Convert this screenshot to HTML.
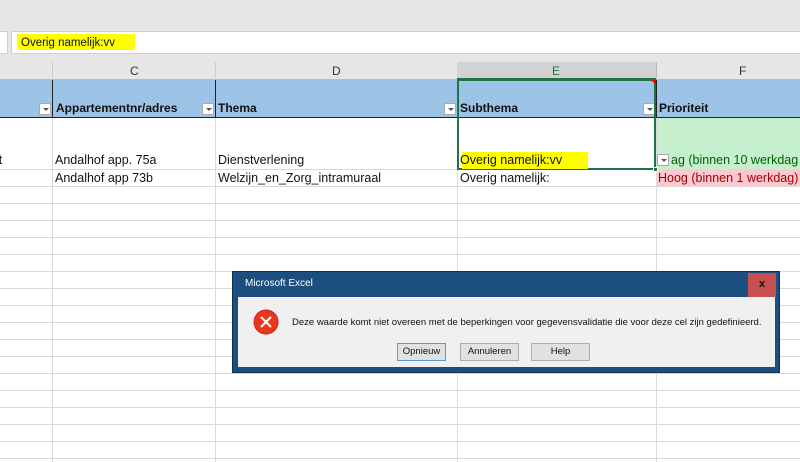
<!DOCTYPE html>
<html><head><meta charset="utf-8"><style>
*{margin:0;padding:0;box-sizing:border-box}
body{width:800px;height:462px;overflow:hidden;background:#fff;font-family:"Liberation Sans","DejaVu Sans",sans-serif;position:relative}
.a{position:absolute}
.t{position:absolute;font-size:12.5px;color:#111;white-space:nowrap;font-family:"Liberation Sans",sans-serif}
.b{font-weight:bold;font-size:12px}
.hl{position:absolute;background:#9dc3e6}
.dd{position:absolute;width:12px;height:12px;background:#fff;border:1px solid #aaa}
.dd:after{content:"";position:absolute;left:3px;top:4px;border-left:3px solid transparent;border-right:3px solid transparent;border-top:3px solid #555}
.hline{position:absolute;left:0;width:800px;height:1px;background:#dadada}
.vline{position:absolute;top:118px;width:1px;height:344px;background:#dadada}
.btn{position:absolute;top:343px;height:18px;background:#e1e1e1;border:1px solid #adadad;font-size:9.5px;text-align:center;line-height:16px;color:#111;font-family:"Liberation Sans",sans-serif}
</style></head><body>
<div class="a" style="left:0;top:0;width:800px;height:62px;background:#e6e6e6"></div>
<div class="a" style="left:0;top:31px;width:8px;height:23px;background:#fff;border:1px solid #d0d0d0;border-left:none"></div>
<div class="a" style="left:11px;top:31px;width:789px;height:23px;background:#fff;border:1px solid #d0d0d0;border-right:none"></div>
<div class="a" style="left:17px;top:34px;width:118px;height:16px;background:#ffff00"></div>
<div class="t" style="left:21px;top:36px;font-size:11.5px;line-height:14px">Overig namelijk:vv</div>
<div class="a" style="left:0;top:62px;width:800px;height:18px;background:#e6e6e6;border-bottom:1px solid #bbb"></div>
<div class="a" style="left:52px;top:62px;width:1px;height:18px;background:#ccc"></div>
<div class="a" style="left:215px;top:62px;width:1px;height:18px;background:#ccc"></div>
<div class="a" style="left:457px;top:62px;width:199px;height:18px;background:#d2d2d2;border-bottom:2px solid #217346"></div>
<div class="a" style="left:656px;top:62px;width:1px;height:18px;background:#bbb"></div>
<div class="t" style="left:130px;top:64px;font-size:12px;color:#333">C</div>
<div class="t" style="left:332px;top:64px;font-size:12px;color:#333">D</div>
<div class="t" style="left:552px;top:64px;font-size:12px;color:#217346">E</div>
<div class="t" style="left:739px;top:64px;font-size:12px;color:#333">F</div>
<div class="hl" style="left:0;top:80px;width:800px;height:38px"></div>
<div class="a" style="left:52px;top:80px;width:1px;height:38px;background:#222"></div>
<div class="a" style="left:215px;top:80px;width:1px;height:38px;background:#222"></div>
<div class="a" style="left:656px;top:80px;width:1px;height:38px;background:#222"></div>
<div class="a" style="left:0;top:117px;width:800px;height:1px;background:#222"></div>
<div class="dd" style="left:39px;top:103px"></div>
<div class="dd" style="left:202px;top:103px"></div>
<div class="dd" style="left:444px;top:103px"></div>
<div class="dd" style="left:643px;top:103px"></div>
<div class="t b" style="left:56px;top:101px">Appartementnr/adres</div>
<div class="t b" style="left:218px;top:101px">Thema</div>
<div class="t b" style="left:460px;top:101px">Subthema</div>
<div class="t b" style="left:659px;top:101px">Prioriteit</div>
<div class="a" style="left:457px;top:79px;width:199px;height:91px;border:2px solid #217346;border-bottom:none"></div>
<div class="a" style="left:651px;top:80px;width:0;height:0;border-left:5px solid transparent;border-top:5px solid #e00"></div>
<div class="a" style="left:657px;top:118px;width:143px;height:52px;background:#c6efce"></div>
<div class="a" style="left:657px;top:170px;width:143px;height:16px;background:#ffc7ce"></div>
<div class="hline" style="top:169px"></div>
<div class="hline" style="top:186px"></div>
<div class="hline" style="top:203px"></div><div class="hline" style="top:220px"></div><div class="hline" style="top:237px"></div><div class="hline" style="top:254px"></div><div class="hline" style="top:271px"></div><div class="hline" style="top:288px"></div><div class="hline" style="top:305px"></div><div class="hline" style="top:322px"></div><div class="hline" style="top:339px"></div><div class="hline" style="top:356px"></div><div class="hline" style="top:373px"></div><div class="hline" style="top:390px"></div><div class="hline" style="top:407px"></div><div class="hline" style="top:424px"></div><div class="hline" style="top:441px"></div><div class="hline" style="top:458px"></div>
<div class="vline" style="left:52px"></div><div class="vline" style="left:215px"></div><div class="vline" style="left:457px"></div><div class="vline" style="left:656px"></div>
<div class="a" style="left:457px;top:118px;width:199px;height:52px;border:2px solid #217346;border-top:none;background:transparent"></div>
<div class="a" style="left:653px;top:167px;width:5px;height:5px;background:#217346;border:1px solid #fff"></div>
<div class="a" style="left:462px;top:152px;width:126px;height:17px;background:#ffff00"></div>
<div class="t" style="left:-4px;top:153px">lt</div>
<div class="t" style="left:55px;top:153px">Andalhof app. 75a</div>
<div class="t" style="left:218px;top:153px">Dienstverlening</div>
<div class="t" style="left:460px;top:153px">Overig namelijk:vv</div>
<div class="dd" style="left:657px;top:154px"></div>
<div class="t" style="left:671px;top:153px;color:#006100">ag (binnen 10 werkdag</div>
<div class="t" style="left:55px;top:171px">Andalhof app 73b</div>
<div class="t" style="left:218px;top:171px">Welzijn_en_Zorg_intramuraal</div>
<div class="t" style="left:460px;top:171px">Overig namelijk:</div>
<div class="t" style="left:658px;top:171px;color:#9c0006">Hoog (binnen 1 werkdag)</div>
<div class="a" style="left:232px;top:271px;width:548px;height:102px;background:#1c4f7f;border:1px solid #0f3050"></div>
<div class="a" style="left:245px;top:278px;font-size:10px;color:#fff;font-family:'Liberation Sans',sans-serif">Microsoft Excel</div>
<div class="a" style="left:748px;top:273px;width:28px;height:24px;background:#c75050;color:#111;font-weight:bold;font-size:11px;text-align:center;line-height:23px">x</div>
<div class="a" style="left:238px;top:297px;width:537px;height:70px;background:#f0f0f0"></div>
<svg class="a" style="left:253px;top:309px" width="26" height="26" viewBox="0 0 26 26"><circle cx="13" cy="13" r="12" fill="#e8391e" stroke="#c22" stroke-width="1"/><path d="M8 8L18 18M18 8L8 18" stroke="#fff" stroke-width="2"/></svg>
<div class="a" style="left:292px;top:317px;font-size:9.5px;color:#111;font-family:'Liberation Sans',sans-serif;white-space:nowrap">Deze waarde komt niet overeen met de beperkingen voor gegevensvalidatie die voor deze cel zijn gedefinieerd.</div>
<div class="btn" style="left:397px;width:49px;border-color:#5b9bd5">Opnieuw</div>
<div class="btn" style="left:460px;width:59px">Annuleren</div>
<div class="btn" style="left:531px;width:59px">Help</div>
</body></html>
